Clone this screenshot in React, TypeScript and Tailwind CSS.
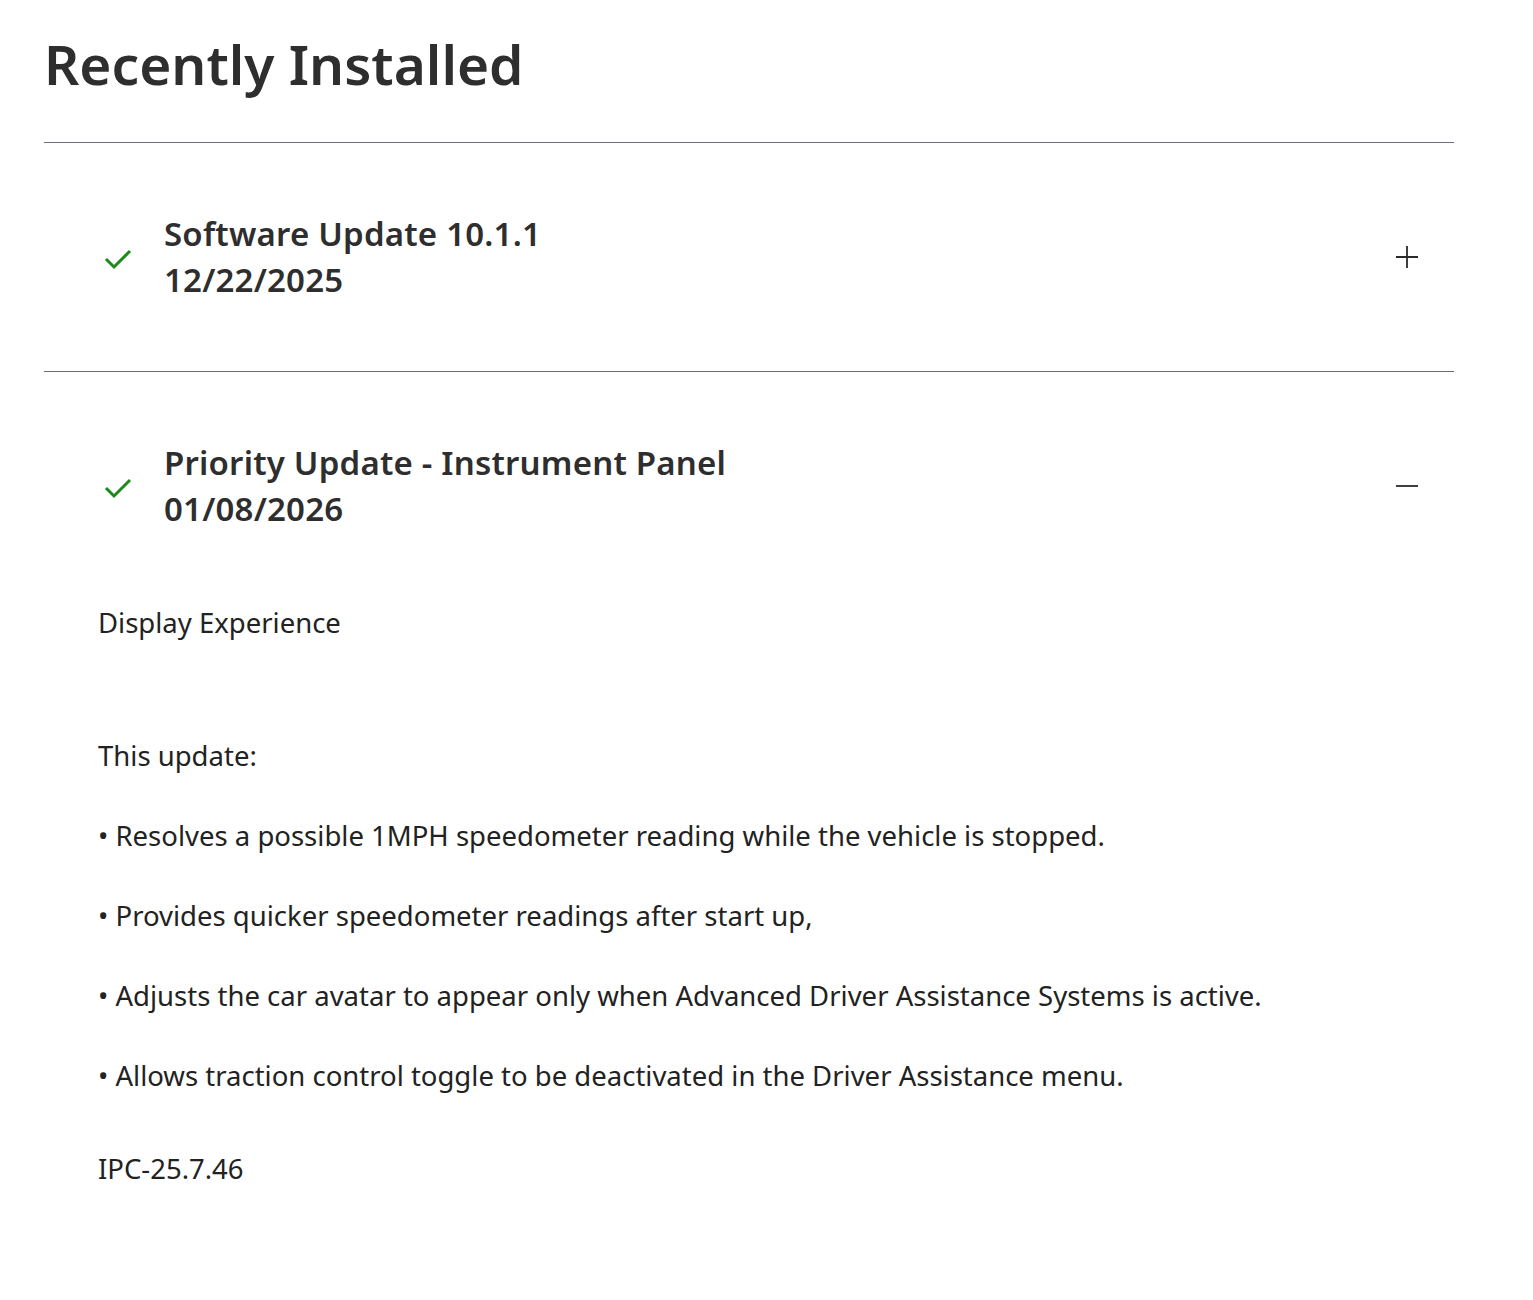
import React from "react";

const Check = () => (
  <svg width="28" height="22" viewBox="0 0 28 22" fill="none">
    <path d="M2 11 L10 19 L26 3" stroke="#1a8a1a" strokeWidth="3" />
  </svg>
);

const Plus = () => (
  <svg width="24" height="24" viewBox="0 0 24 24" fill="none">
    <path d="M12 1 V23 M1 12 H23" stroke="#2a2a2a" strokeWidth="1.8" />
  </svg>
);

const Minus = () => (
  <svg width="24" height="24" viewBox="0 0 24 24" fill="none">
    <path d="M1 12 H23" stroke="#2a2a2a" strokeWidth="1.8" />
  </svg>
);

function Item({ title, date, open }: { title: string; date: string; open?: boolean }) {
  return (
    <div className="flex items-center py-[68px] pl-[60px] pr-[35px]">
      <div className="w-[60px] flex items-center pt-[4px]"><Check /></div>
      <div className="flex-1 text-[33px] leading-[46px] font-semibold text-[#2e2e2e] tracking-[0.2px]">
        <div>{title}</div>
        <div>{date}</div>
      </div>
      {open ? <Minus /> : <Plus />}
    </div>
  );
}

export default function App() {
  return (
    <div className="bg-white min-h-[1300px] pl-[44px] pr-[79px] pt-[28px]" style={{ fontFamily: '"Noto Sans", sans-serif' }}>
      <h1 className="text-[55px] font-semibold text-[#2e2e2e] leading-[72px] mb-[42px]">Recently Installed</h1>
      <div className="border-t border-[#6e6e82]">
        <Item title="Software Update 10.1.1" date="12/22/2025" />
      </div>
      <div className="border-t border-[#6e6e6e]">
        <Item title="Priority Update - Instrument Panel" date="01/08/2026" open />
        <div className="pl-[54px] -mt-[40px] text-[27.5px] leading-[32px] text-[#222]">
          <p className="mt-[47px]">Display Experience</p>
          <p className="mt-[101px]">This update:</p>
          <p className="mt-[48px]">• Resolves a possible 1MPH speedometer reading while the vehicle is stopped.</p>
          <p className="mt-[48px]">• Provides quicker speedometer readings after start up,</p>
          <p className="mt-[48px]">• Adjusts the car avatar to appear only when Advanced Driver Assistance Systems is active.</p>
          <p className="mt-[48px]">• Allows traction control toggle to be deactivated in the Driver Assistance menu.</p>
          <p className="mt-[61px]">IPC-25.7.46</p>
        </div>
      </div>
    </div>
  );
}
